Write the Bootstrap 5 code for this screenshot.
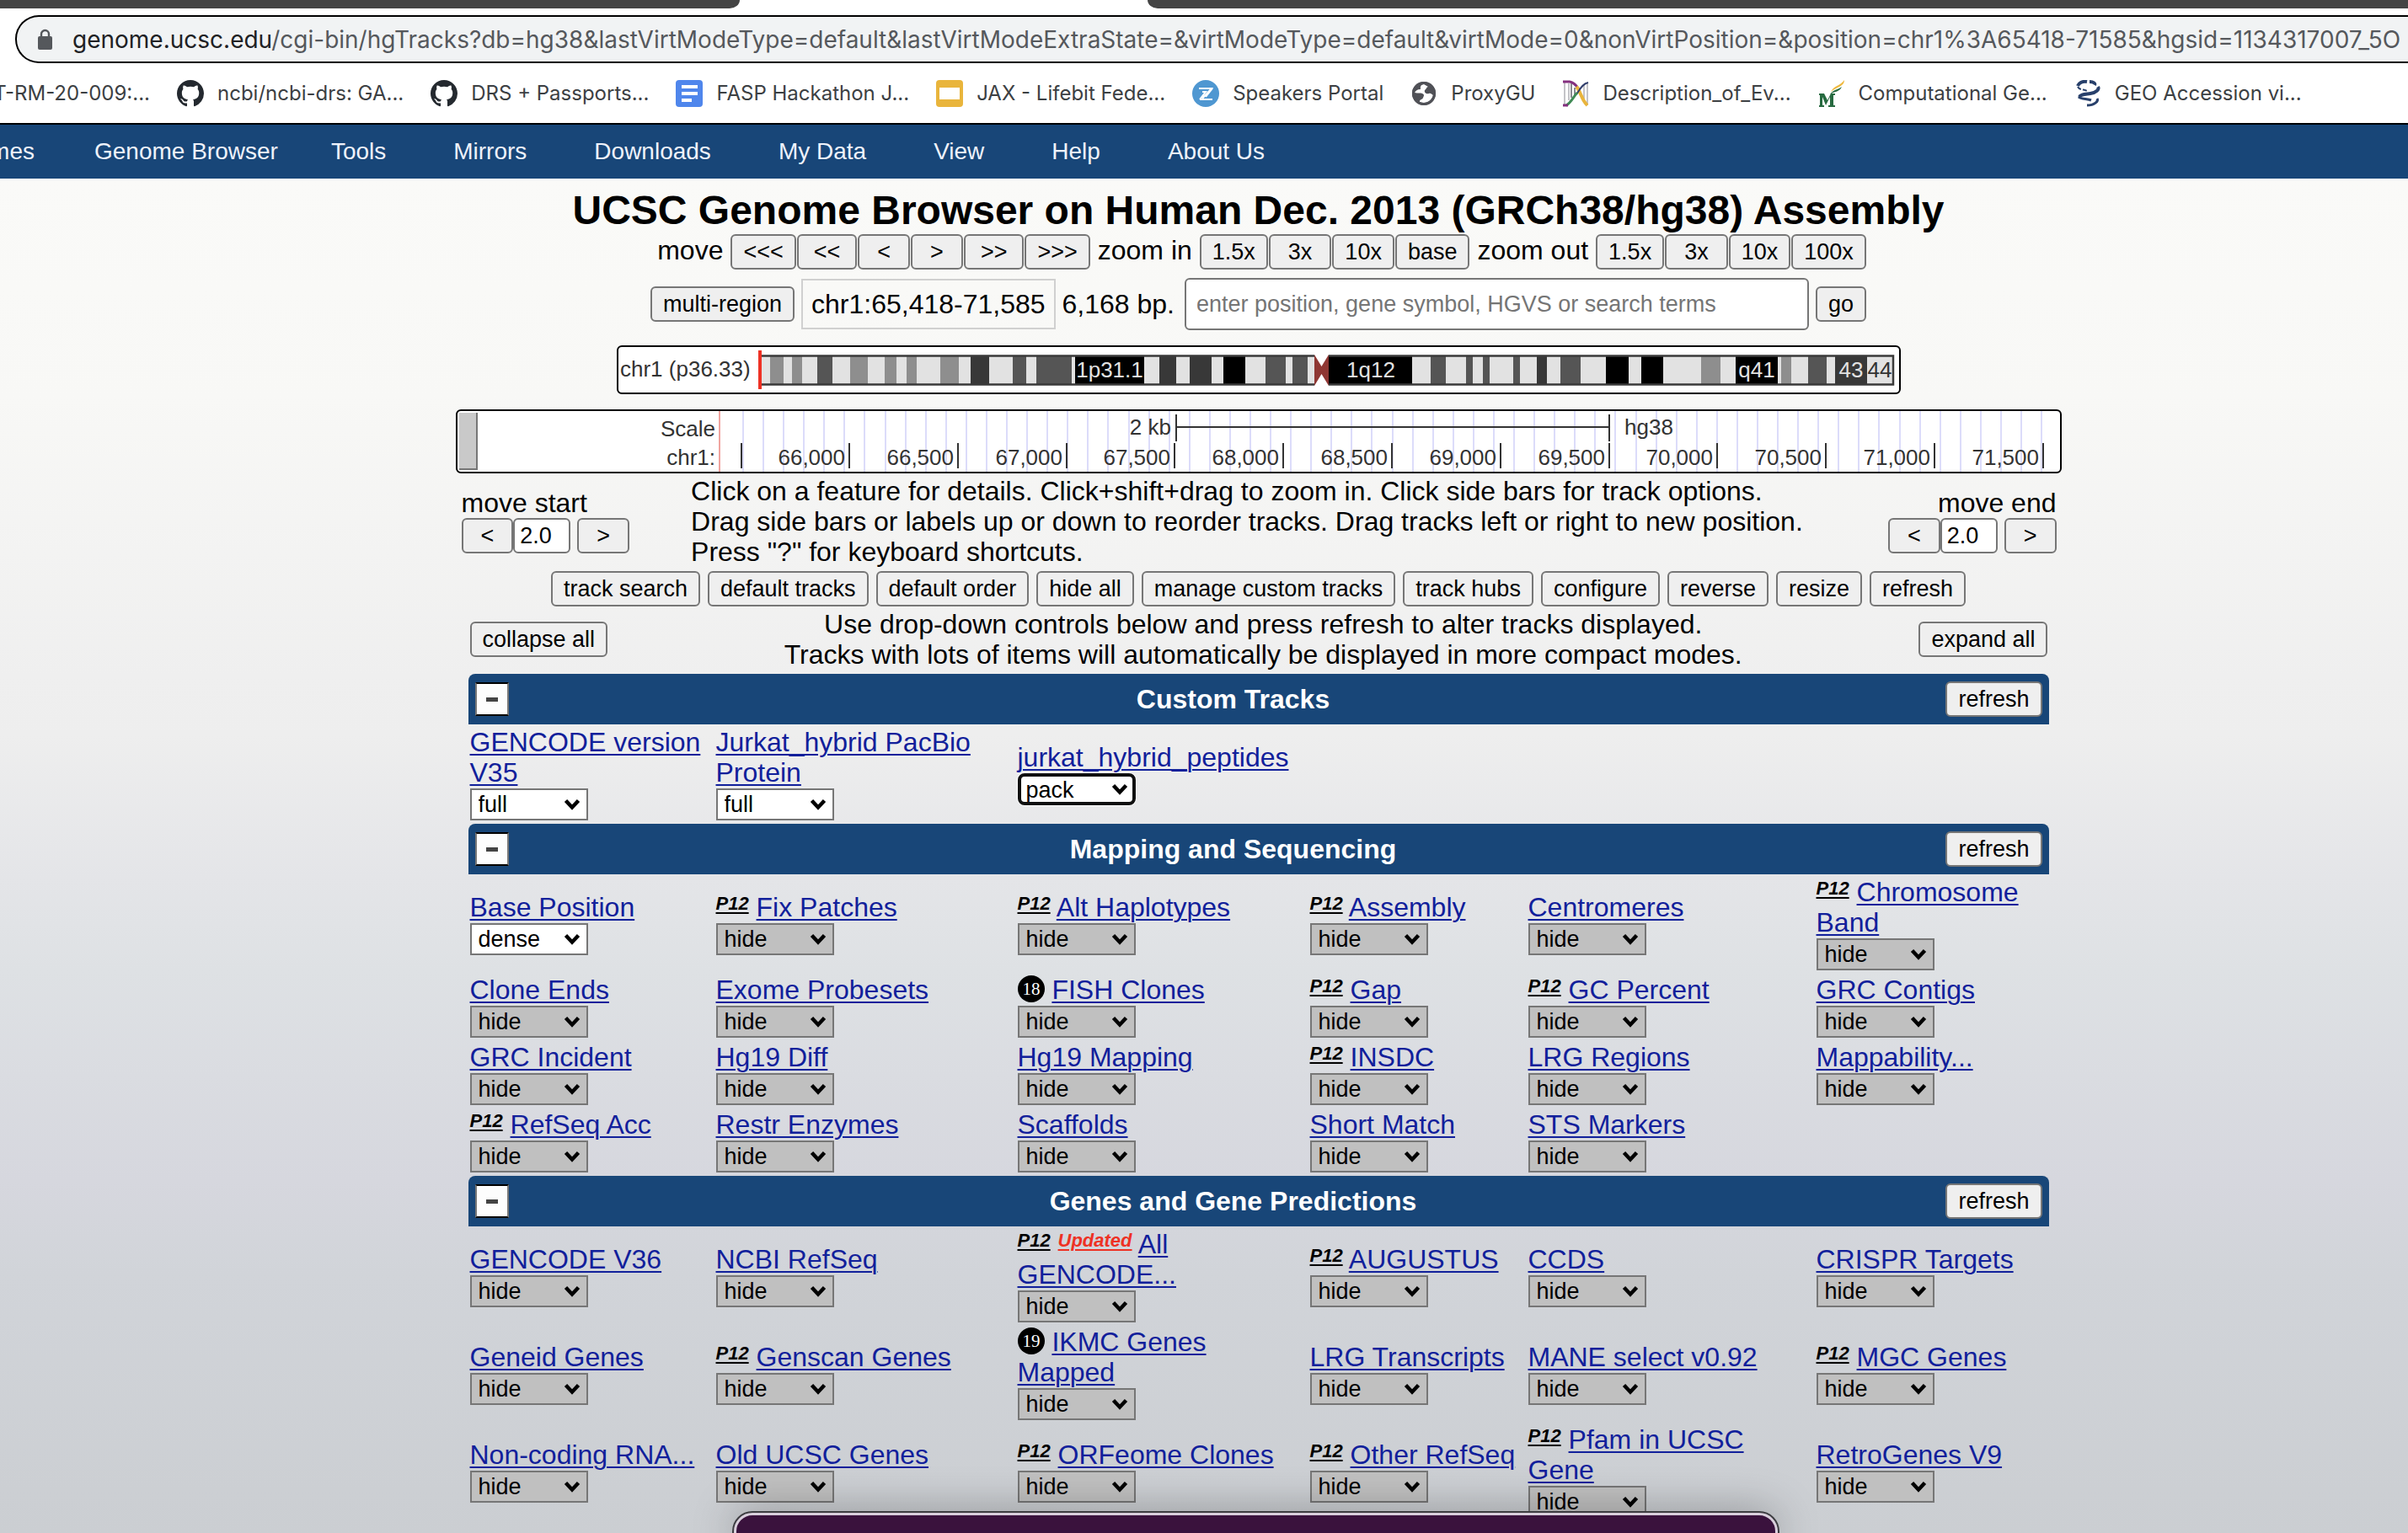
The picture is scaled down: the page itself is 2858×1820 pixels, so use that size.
<!DOCTYPE html>
<html lang="en">
<head>
<meta charset="utf-8">
<meta name="viewport" content="width=device-width, initial-scale=1">
<title>UCSC Genome Browser on Human Dec. 2013 (GRCh38/hg38)</title>
<link href="https://cdn.jsdelivr.net/npm/bootstrap@5.3.0/dist/css/bootstrap.min.css" rel="stylesheet">
<style>
:root { --ucsc-blue: #184678; --link-ink: #11209b; }
body {
  font: 32px/36px "Liberation Sans", Arial, sans-serif;
  color: #000;
  background: #fff;
  overflow-x: hidden;
}
.screen { height: 100vh; overflow: hidden; }

/* browser chrome */
.chrome { font-family: Inter, Roboto, sans-serif; background: #fff; }
.tabstrip { height: 10px; background: #fff; }
.tab-left { width: 878px; background: #444; border-bottom-right-radius: 12px 10px; }
.tab-gap { width: 484px; }
.tab-right { background: #444; border-bottom-left-radius: 12px 10px; }
.omnibox {
  height: 57px; margin: 8px 0 0 18px; padding-left: 25px; gap: 24px;
  background: #f1f3f4; border: 2px solid #000; border-right: 0;
  border-radius: 28px 0 0 28px; overflow: hidden;
}
.url-text { font-size: 28px; color: #55585c; white-space: nowrap; }
.url-text b { font-weight: 400; color: #202124; }
.bookmarks { height: 71px; gap: 32px; color: #3c4043; font-size: 24px; overflow: hidden; }
.bookmarks a { color: inherit; text-decoration: none; white-space: nowrap; gap: 16px; }
.cut-start { overflow: hidden; justify-content: flex-end; }
.bm-first { width: 178px; }
.bm-icon { width: 32px; height: 32px; flex: none; }

/* site menu */
.sitebar { background: var(--ucsc-blue); border-top: 2px solid #000; height: 66px; font-size: 28px; overflow: hidden; }
.sitebar a { color: #eef2fb; text-decoration: none; padding: 0 40px; white-space: nowrap; }
.sitebar a.menu-first { width: 41px; padding: 0; }
.sitebar a.menu-home { padding: 0 23px 0 71px; }

.genome {
  background: linear-gradient(#fafaf8 0, #f8f8f6 260px, #efefef 590px, #eeeeee 660px, #e4e5e8 830px, #dee1e4 940px, #d6d7de 1190px, #d1d4d9 1300px, #cbced2 1608px);
  min-height: calc(100vh - 212px);
  padding-left: 129px;
}
.genome-page { width: 100%; max-width: 1906px; margin: 0 auto; padding-top: 10px; }
.genome h1 { font-size: 48px; line-height: 56px; font-weight: 700; margin: 0; text-align: center; }

.ub {
  --bs-btn-font-size: 27px; --bs-btn-line-height: 38px;
  --bs-btn-padding-x: 13px; --bs-btn-padding-y: 0px;
  --bs-btn-border-width: 2px; --bs-btn-border-radius: 6px;
  --bs-btn-color: #000; --bs-btn-bg: #efefef; --bs-btn-border-color: #767676;
  --bs-btn-hover-color: #000; --bs-btn-hover-bg: #e5e5e5; --bs-btn-hover-border-color: #555;
  white-space: nowrap; flex: none;
}
.ub-m { --bs-btn-padding-x: 18px; }
.ub-w { --bs-btn-padding-x: 21px; }
.navline { height: 42px; gap: 1px; }
.navline .cap { padding-bottom: 4px; margin: 0 8px; }
.searchline { margin-top: 10px; height: 62px; gap: 8px; }
.pos-box { border: 2px solid #d0d0d0; padding: 0 10px; height: 60px; line-height: 56px; }
.ub-input {
  border: 2px solid #767676; border-radius: 6px; background: #fff; color: #000;
  font-size: 27px; outline: 0;
}
.ub-input::placeholder { color: #757575; opacity: 1; }
.search-input { width: 741px; height: 62px; padding: 0 12px; }
.step-input { width: 68px; height: 42px; padding: 0 6px; }

.ideo { width: 1524px; max-width: 80%; margin: 18px auto 0; border: 2px solid #000; border-radius: 6px; background: #fff; }
.trackimg { margin-top: 18px; border: 2px solid #000; border-radius: 6px; background: #fff; }
.ideo svg, .trackimg svg { display: block; width: 100%; height: auto; }

.helpline { margin: 3px 6px 0 7px; height: 108px; }
.helpline .tip { margin-right: auto; margin-left: 73px; }
.stepper { padding-top: 14px; }
.buttons { margin-top: 5px; gap: 9px; }
.collapse-line { margin: 2px 16px 4px 17px; height: 74px; }

.group { margin: 0 15px; }
.group-bar {
  height: 60px; padding: 0 8px; background: var(--ucsc-blue); color: #fff;
  border-radius: 8px 8px 0 0; font-weight: 700;
}
.group-bar h2 { font-size: 32px; line-height: 36px; font-weight: 700; margin: 0; text-align: center; padding-left: 14px; }
.toggle {
  width: 40px; height: 40px; padding: 0; background: #fdfdfd;
  border: 2px solid; border-color: #000 #777; display: grid; place-items: center;
}
.toggle::before { content: ""; width: 14px; height: 5px; background: #444; }
.group-body { padding-top: 2px; }
.track-row {
  display: grid; padding: 1px 0 4px 2px; align-items: center;
  grid-template-columns: 292fr 358fr 347fr 259fr 342fr 276fr;
}
.track-name { display: block; padding-right: 6px; }
.track-name a { color: var(--link-ink); text-decoration: underline; text-decoration-thickness: 2px; text-underline-offset: 3px; }
.note {
  font: italic 700 22px/22px "Liberation Sans", Arial, sans-serif; color: #000;
  position: relative; top: -8px; text-decoration: underline; text-decoration-thickness: 2px; text-underline-offset: 3px;
}
.note-new { color: #ee3124; }
.archive { display: inline-block; width: 32px; height: 32px; vertical-align: -4px; }
.vis {
  display: block; width: 140px; height: 38px; margin-top: 1px; padding: 0 8px;
  border: 2px solid #767676; border-radius: 0; color: #000; font-size: 27px; line-height: 32px;
  appearance: none; background: #c0c0c0 url("data:image/svg+xml,%3Csvg xmlns='http://www.w3.org/2000/svg' viewBox='0 0 20 14'%3E%3Cpath d='M2.500 2.500 10 10.500 17.500 2.500' fill='none' stroke='black' stroke-width='4.500'/%3E%3C/svg%3E") no-repeat right 7px center / 20px 14px;
}
.vis-on { background-color: #fff; }
.vis-active { border: 4px solid #101010; border-radius: 8px; padding: 0 6px; background-position: right 5px center; box-shadow: 0 0 0 1px #fff; }

.dock {
  position: fixed; bottom: -8px; left: 871px; right: 748px; height: 32px;
  background: #3a123d; border: 3px solid #d9cfdc; border-radius: 22px 22px 0 0;
  box-shadow: 0 0 0 2px #3c3c40, 0 0 50px rgba(0, 0, 0, .35);
}
</style>
<script src="https://cdn.jsdelivr.net/npm/bootstrap@5.3.0/dist/js/bootstrap.bundle.min.js"></script>
</head>
<body>
<div class="screen">
<header class="chrome">
  <div class="tabstrip d-flex">
    <div class="tab-left"></div><div class="tab-gap"></div><div class="tab-right flex-grow-1"></div>
  </div>
  <div class="omnibox d-flex align-items-center">
    <svg width="17" height="26" viewBox="0 0 17 26" class="flex-shrink-0"><path d="M4 11V6.500a4.500 4.500 0 0 1 9 0V11" fill="none" stroke="#55585c" stroke-width="2.400"/><rect y="9" width="17" height="16" rx="2" fill="#55585c"/></svg>
    <div class="url-text" role="textbox" aria-label="Address"><b>genome.ucsc.edu</b>/cgi-bin/hgTracks?db=hg38&amp;lastVirtModeType=default&amp;lastVirtModeExtraState=&amp;virtModeType=default&amp;virtMode=0&amp;nonVirtPosition=&amp;position=chr1%3A65418-71585&amp;hgsid=1134317007_5O</div>
  </div>
  <nav class="bookmarks d-flex align-items-center" aria-label="Bookmarks">
    <a href="#" class="bm-first cut-start d-flex">OT-RM-20-009:...</a>
    <a href="#" class="d-flex align-items-center"><svg class="bm-icon" viewBox="0 0 16 16"><path fill="#24292f" d="M8 0C3.580 0 0 3.580 0 8c0 3.540 2.290 6.530 5.470 7.590.4.070.55-.17.55-.38 0-.19-.01-.82-.01-1.490-2.010.37-2.530-.49-2.690-.94-.09-.23-.48-.94-.82-1.130-.28-.15-.68-.52-.01-.53.63-.01 1.080.58 1.230.82.72 1.210 1.870.87 2.330.66.07-.52.28-.87.51-1.070-1.780-.2-3.640-.89-3.640-3.950 0-.87.31-1.590.82-2.150-.08-.2-.36-1.020.08-2.120 0 0 .67-.21 2.200.82.64-.18 1.320-.27 2-.27s1.360.09 2 .27c1.530-1.040 2.200-.82 2.200-.82.44 1.100.16 1.920.08 2.120.51.56.82 1.270.82 2.150 0 3.070-1.870 3.750-3.650 3.950.29.25.54.73.54 1.480 0 1.070-.01 1.930-.01 2.200 0 .21.15.46.55.38A8.010 8.010 0 0 0 16 8c0-4.420-3.580-8-8-8"/></svg>ncbi/ncbi-drs: GA...</a>
    <a href="#" class="d-flex align-items-center"><svg class="bm-icon" viewBox="0 0 16 16"><path fill="#24292f" d="M8 0C3.580 0 0 3.580 0 8c0 3.540 2.290 6.530 5.470 7.590.4.070.55-.17.55-.38 0-.19-.01-.82-.01-1.490-2.010.37-2.530-.49-2.690-.94-.09-.23-.48-.94-.82-1.130-.28-.15-.68-.52-.01-.53.63-.01 1.080.58 1.230.82.72 1.210 1.870.87 2.330.66.07-.52.28-.87.51-1.070-1.780-.2-3.640-.89-3.640-3.950 0-.87.31-1.590.82-2.150-.08-.2-.36-1.020.08-2.120 0 0 .67-.21 2.200.82.64-.18 1.320-.27 2-.27s1.360.09 2 .27c1.530-1.040 2.200-.82 2.200-.82.44 1.100.16 1.920.08 2.120.51.56.82 1.270.82 2.150 0 3.070-1.870 3.750-3.650 3.950.29.25.54.73.54 1.480 0 1.070-.01 1.930-.01 2.200 0 .21.15.46.55.38A8.010 8.010 0 0 0 16 8c0-4.420-3.580-8-8-8"/></svg>DRS + Passports...</a>
    <a href="#" class="d-flex align-items-center"><svg class="bm-icon" viewBox="0 0 32 32"><rect width="32" height="32" rx="4" fill="#4f86ec"/><path d="M7 8h19M7 16h19M7 24h12" stroke="#fff" stroke-width="4"/></svg>FASP Hackathon J...</a>
    <a href="#" class="d-flex align-items-center"><svg class="bm-icon" viewBox="0 0 32 32"><rect width="32" height="32" rx="4" fill="#e9b53c"/><rect x="4" y="9" width="24" height="14" fill="#fff"/></svg>JAX - Lifebit Fede...</a>
    <a href="#" class="d-flex align-items-center"><svg class="bm-icon" viewBox="0 0 32 32"><circle cx="16" cy="16" r="16" fill="#4f97d1"/><path d="M8 10h15L12 22M9 23h15M12 14h4l-7 9M16 20l8-10" fill="none" stroke="#fff" stroke-width="2"/></svg>Speakers Portal</a>
    <a href="#" class="d-flex align-items-center"><svg class="bm-icon" viewBox="0 0 32 32"><circle cx="16" cy="16" r="14" fill="#505157"/><path d="M17 5c-5 1-4 4-4 6-4 0-6 2-7 4 4 1 7 0 9 1 3 1 2 3 1 5-1 3-4 1-4 5 7 3 14-1 16-8-2-1-3-3-5-2-3 1-6-1-5-4 2-1 2-4 4-4z" fill="#fff" transform="translate(-1 0)"/><circle cx="16" cy="16" r="12.500" fill="none" stroke="#505157" stroke-width="3"/></svg>ProxyGU</a>
    <a href="#" class="d-flex align-items-center"><svg class="bm-icon" viewBox="0 0 32 32"><path d="M3 3v27M8 4v20M26 6v20M30 4v26" stroke="#c4c4c8" stroke-width="2"/><path d="M11 4v17M15 9v10" stroke="#8a8a92" stroke-width="2"/><path d="M1 2h8c6 1 9 6 11 9" fill="none" stroke="#84307f" stroke-width="3"/><path d="M17 8c5 5 6 16 13 22" fill="none" stroke="#e9b53c" stroke-width="4"/><path d="M31 3c-8 2-10 9-14 14" fill="none" stroke="#2f3c6a" stroke-width="2"/><path d="M18 15C14 19 10 28 5 30" fill="none" stroke="#3f8a55" stroke-width="3"/><path d="M1 30h6" stroke="#84307f" stroke-width="3"/></svg>Description_of_Ev...</a>
    <a href="#" class="d-flex align-items-center"><svg class="bm-icon" viewBox="0 0 32 32"><path d="M1 16h6l4 8 4-8h5v2h-2v12h2v2h-8v-2h2V20l-5 10L5 20v10h2v2H1v-2h1V18H1z" fill="#276a40"/><path d="M15 14C18 7 26 7 31 0c0 8-9 8-16 14z" fill="#efb93f"/><path d="M14 17c4-6 9-5 14-9-3 7-9 5-14 9z" fill="#276a40"/></svg>Computational Ge...</a>
    <a href="#" class="d-flex align-items-center"><svg class="bm-icon" viewBox="0 0 32 32"><g fill="none" stroke="#28406b"><path d="M18 2c5 0 7 2 6 4M28 8c2 3-2 7-9 8S7 17 6 20" stroke-width="4"/><path d="M15 2C9 1 5 4 4 7" stroke-width="4"/><path d="M4 8c2 4 8 3 11 5" stroke-width="2" stroke-dasharray="5 2"/><path d="M5 20c3 3 10 2 15 4M27 22c2 3-3 8-12 8" stroke-width="3"/></g></svg>GEO Accession vi...</a>
  </nav>
</header>

<nav class="sitebar d-flex align-items-center" aria-label="Site">
  <a href="#" class="menu-first cut-start d-flex">Genomes</a>
  <a href="#" class="menu-home">Genome Browser</a>
  <a href="#">Tools</a><a href="#">Mirrors</a><a href="#">Downloads</a><a href="#">My Data</a><a href="#">View</a><a href="#">Help</a><a href="#">About Us</a>
</nav>

<main class="genome">
<div class="genome-page">
  <h1>UCSC Genome Browser on Human Dec. 2013 (GRCh38/hg38) Assembly</h1>

  <div class="navline d-flex justify-content-center align-items-center">
    <span class="cap">move</span>
    <button class="btn ub" type="button">&lt;&lt;&lt;</button>
    <button class="btn ub ub-m" type="button">&lt;&lt;</button>
    <button class="btn ub ub-w" type="button">&lt;</button>
    <button class="btn ub ub-w" type="button">&gt;</button>
    <button class="btn ub ub-m" type="button">&gt;&gt;</button>
    <button class="btn ub" type="button">&gt;&gt;&gt;</button>
    <span class="cap">zoom in</span>
    <button class="btn ub" type="button">1.5x</button>
    <button class="btn ub ub-w" type="button">3x</button>
    <button class="btn ub" type="button">10x</button>
    <button class="btn ub" type="button">base</button>
    <span class="cap">zoom out</span>
    <button class="btn ub" type="button">1.5x</button>
    <button class="btn ub ub-w" type="button">3x</button>
    <button class="btn ub" type="button">10x</button>
    <button class="btn ub" type="button">100x</button>
  </div>

  <div class="searchline d-flex justify-content-center align-items-center">
    <button class="btn ub" type="button">multi-region</button>
    <span class="pos-box">chr1:65,418-71,585</span>
    <span class="me-1">6,168 bp.</span>
    <input class="ub-input search-input" type="text" aria-label="Search" placeholder="enter position, gene symbol, HGVS or search terms">
    <button class="btn ub" type="button">go</button>
  </div>

  <div class="ideo"><svg id="ideogram" viewBox="734 412 1520 54" font-family="Liberation Sans, Arial, sans-serif" font-size="26"></svg></div>
  <div class="trackimg"><svg id="ruler" viewBox="542 488 1902 72" font-family="Liberation Sans, Arial, sans-serif" font-size="26" fill="#333"></svg></div>

  <div class="helpline d-flex">
    <div class="stepper">
      <label for="stepStart" class="d-block">move start</label>
      <div class="d-flex">
        <button class="btn ub ub-w" type="button">&lt;</button>
        <input class="ub-input step-input" id="stepStart" type="text" value="2.0">
        <button class="btn ub ub-w ms-2" type="button">&gt;</button>
      </div>
    </div>
    <div class="tip">Click on a feature for details. Click+shift+drag to zoom in. Click side bars for track options.<br>Drag side bars or labels up or down to reorder tracks. Drag tracks left or right to new position.<br>Press "?" for keyboard shortcuts.</div>
    <div class="stepper">
      <label for="stepEnd" class="d-block text-end">move end</label>
      <div class="d-flex">
        <button class="btn ub ub-w" type="button">&lt;</button>
        <input class="ub-input step-input" id="stepEnd" type="text" value="2.0">
        <button class="btn ub ub-w ms-2" type="button">&gt;</button>
      </div>
    </div>
  </div>

  <div class="buttons d-flex justify-content-center">
    <button class="btn ub" type="button">track search</button>
    <button class="btn ub" type="button">default tracks</button>
    <button class="btn ub" type="button">default order</button>
    <button class="btn ub" type="button">hide all</button>
    <button class="btn ub" type="button">manage custom tracks</button>
    <button class="btn ub" type="button">track hubs</button>
    <button class="btn ub" type="button">configure</button>
    <button class="btn ub" type="button">reverse</button>
    <button class="btn ub" type="button">resize</button>
    <button class="btn ub" type="button">refresh</button>
  </div>

  <div class="collapse-line d-flex justify-content-between align-items-center">
    <button class="btn ub" type="button">collapse all</button>
    <div class="text-center">Use drop-down controls below and press refresh to alter tracks displayed.<br>Tracks with lots of items will automatically be displayed in more compact modes.</div>
    <button class="btn ub" type="button">expand all</button>
  </div>

  <div id="groups"></div>
</div>
</main>
</div>
<div class="dock"></div>

<script>
// chromosome bands: [x, width, shade]
const bands = [
  [914,16,'#8e8e8e'],[940,12,'#8e8e8e'],[970,18,'#555'],[1009,21,'#8e8e8e'],[1050,14,'#8e8e8e'],
  [1076,12,'#8e8e8e'],[1116,22,'#8e8e8e'],[1152,22,'#383838'],[1202,16,'#555'],[1230,42,'#555'],
  [1276,82,'#000'],[1376,20,'#383838'],[1412,26,'#383838'],[1452,26,'#000'],[1502,24,'#555'],
  [1534,18,'#555'],[1577,99,'#000'],[1698,18,'#555'],[1740,8,'#555'],[1760,8,'#555'],
  [1796,8,'#555'],[1824,12,'#383838'],[1852,24,'#555'],[1906,27,'#000'],[1948,26,'#000'],
  [2019,23,'#8e8e8e'],[2060,50,'#000'],[2114,12,'#8e8e8e'],[2146,22,'#555'],[2178,38,'#383838']];
let s = '<text x="736" y="447" fill="#333">chr1 (p36.33)</text><rect x="904" y="422" width="343" height="35" fill="#e2e2e2"/><rect x="1247" y="422" width="1001" height="35" fill="#e2e2e2"/>';
for (const [x, w, c] of bands) s += `<rect x="${x}" y="422" width="${w}" height="35" fill="${c}"/>`;
s += '<path d="M904 422.500H2247V456.500H904" fill="none" stroke="#3a3a3a" stroke-width="2.500"/>';
s += '<rect x="1560" y="420" width="17" height="38" fill="#fff"/><path d="M1560 421l8.500 14 8.500-14v37l-8.500-14-8.500 14z" fill="#8f3733"/>';
s += '<path d="M902 416v46" stroke="#ee3124" stroke-width="4"/>';
for (const [x, t, c] of [[1317,'1p31.1','#e2e2e2'],[1627,'1q12','#e2e2e2'],[2085,'q41','#e2e2e2'],[2197,'43','#e2e2e2'],[2231,'44','#333']])
  s += `<text x="${x}" y="448" text-anchor="middle" fill="${c}">${t}</text>`;
document.getElementById('ideogram').innerHTML = s;

// position ruler
let r = '<rect x="544" y="490" width="22" height="68" fill="#c9c9c9"/><path d="M565 490v67H544" fill="none" stroke="#777" stroke-width="2"/>';
for (let i = 0; i < 65; i++) r += `<path d="M${881 + Math.round(i * 24.08)} 488v72" stroke="#dcdcfa" stroke-width="2"/>`;
r += '<path d="M853 488v72" stroke="#f0a5a0" stroke-width="2"/>';
r += '<text x="848" y="518" text-anchor="end">Scale</text><text x="848" y="552" text-anchor="end">chr1:</text>';
r += '<text x="1389" y="516" text-anchor="end">2 kb</text><text x="1927" y="516">hg38</text>';
r += '<path d="M1395 492v32M1909 492v32M1395 507H1909M879 526v30" fill="none" stroke="#333" stroke-width="2"/>';
for (let i = 0; i < 12; i++) {
  const x = 1007 + Math.round(i * 128.8);
  r += `<path d="M${x} 526v30" stroke="#333" stroke-width="2"/><text x="${x - 5}" y="552" text-anchor="end">${(66000 + i * 500).toLocaleString('en-US')}</text>`;
}
document.getElementById('ruler').innerHTML = r;

// track groups; a leading * marks P12, # marks an archive number, ! marks Updated
const groups = [
  ['Custom Tracks', [['GENCODE version V35','Jurkat_hybrid PacBio Protein','jurkat_hybrid_peptides']]],
  ['Mapping and Sequencing', [
    ['Base Position','*Fix Patches','*Alt Haplotypes','*Assembly','Centromeres','*Chromosome Band'],
    ['Clone Ends','Exome Probesets','#18 FISH Clones','*Gap','*GC Percent','GRC Contigs'],
    ['GRC Incident','Hg19 Diff','Hg19 Mapping','*INSDC','LRG Regions','Mappability...'],
    ['*RefSeq Acc','Restr Enzymes','Scaffolds','Short Match','STS Markers']]],
  ['Genes and Gene Predictions', [
    ['GENCODE V36','NCBI RefSeq','*!All<br>GENCODE...','*AUGUSTUS','CCDS','CRISPR Targets'],
    ['Geneid Genes','*Genscan Genes','#19 IKMC Genes<br>Mapped','LRG Transcripts','MANE select v0.92','*MGC Genes'],
    ['Non-coding RNA...','Old UCSC Genes','*ORFeome Clones','*Other RefSeq','*Pfam in UCSC<br>Gene','RetroGenes V9']]]];
const modes = { 'GENCODE version V35': 'full', 'Jurkat_hybrid PacBio Protein': 'full', 'jurkat_hybrid_peptides': 'pack', 'Base Position': 'dense' };
let n = 0, out = '';
for (const [title, rows] of groups) {
  out += `<section class="group"><div class="group-bar d-flex align-items-center"><button class="toggle" type="button" aria-label="Collapse ${title}"></button><h2 class="flex-grow-1">${title}</h2><button class="btn ub" type="button">refresh</button></div><div class="group-body">`;
  for (const row of rows) {
    out += '<div class="track-row">';
    for (let name of row) {
      let pre = '';
      const mode = modes[name] || 'hide';
      if (name[0] === '*') { pre += '<i class="note">P12</i> '; name = name.slice(1); }
      if (name[0] === '!') { pre += '<i class="note note-new">Updated</i> '; name = name.slice(1); }
      if (name[0] === '#') {
        pre += `<svg class="archive" viewBox="0 0 32 32"><circle cx="16" cy="16" r="16"/><text x="16" y="23" text-anchor="middle" fill="#fff" font-family="Liberation Serif, serif" font-size="21">${name.slice(1, 3)}</text></svg> `;
        name = name.slice(4);
      }
      const id = 'track' + (++n);
      const cls = mode === 'hide' ? '' : mode === 'pack' ? ' vis-on vis-active' : ' vis-on';
      out += `<div><label class="track-name" for="${id}">${pre}<a href="#">${name}</a></label><select class="vis${cls}" id="${id}"><option>${mode}</option></select></div>`;
    }
    out += '</div>';
  }
  out += '</div></section>';
}
document.getElementById('groups').innerHTML = out;
</script>
</body>
</html>
